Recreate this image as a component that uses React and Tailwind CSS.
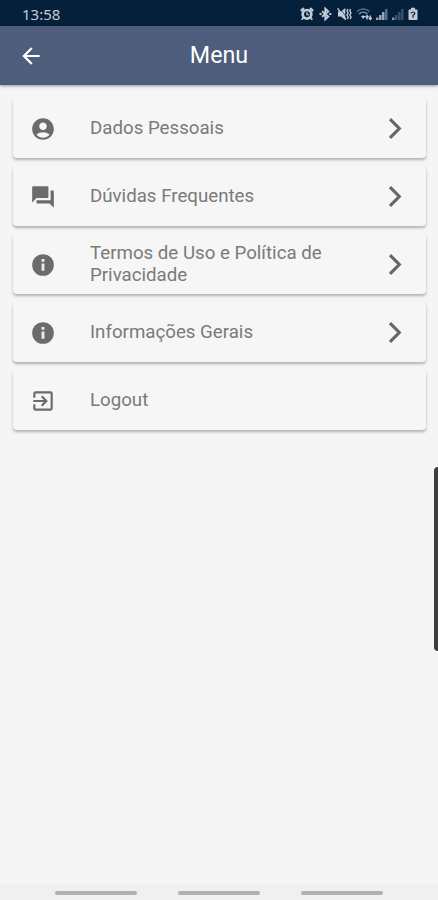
import React from "react";
import { MdAccountCircle, MdArrowBack, MdExitToApp, MdForum } from "react-icons/md";

const InfoIcon = ({ className }) => (
  <svg viewBox="0 0 24 24" fill="currentColor" className={className}>
    <circle cx="12" cy="12" r="10" />
    <path d="M10.700 6.500h2.600v2.500h-2.600zM10.700 10.700h2.600v6.600h-2.600z" fill="#ededed" />
  </svg>
);

const menuItems = [
  { id: "profile", label: "Dados Pessoais", icon: MdAccountCircle, arrow: true },
  { id: "faq", label: "Dúvidas Frequentes", icon: MdForum, arrow: true },
  { id: "terms", label: "Termos de Uso e Política de Privacidade", icon: InfoIcon, arrow: true },
  { id: "general", label: "Informações Gerais", icon: InfoIcon, arrow: true },
  { id: "logout", label: "Logout", icon: MdExitToApp, arrow: false },
];

const ChevronIcon = ({ className }) => (
  <svg width="14" height="22" viewBox="0 0 14 22" fill="none" stroke="currentColor" strokeWidth="3.100" className={className}>
    <path d="M2 1.200 11.300 10.500 2 19.800" />
  </svg>
);

const AlarmIcon = () => (
  <svg width="14" height="14" viewBox="0 0 14 14" fill="none" stroke="currentColor">
    <path d="M.8 3.800 4 1.200M13.200 3.800 10 1.200" strokeWidth="2.200" />
    <circle cx="7" cy="7.300" r="4.300" strokeWidth="2.700" />
    <path d="M7 5v2.700h2" strokeWidth="1.200" />
    <path d="M3.500 10.500 1.700 12.800M10.500 10.500l1.800 2.300" strokeWidth="1.800" />
  </svg>
);

const BluetoothIcon = () => (
  <svg width="13" height="14" viewBox="0 0 13 14" fill="none" stroke="currentColor">
    <path d="M3 4.200 9.300 9.600 6.300 12.400V1.600L9.300 4.400 3 9.800" strokeWidth="1.900" />
    <path d="M.5 6h2v2h-2zM10.300 6h2v2h-2z" fill="currentColor" stroke="none" />
  </svg>
);

const MuteIcon = () => (
  <svg width="15" height="14" viewBox="0 0 15 14" fill="currentColor">
    <path d="M1 4.500h3L8.300 1v12L4 9.500H1z" />
    <path d="M2.500 1 9 9.500" stroke="#04203b" strokeWidth=".7" />
    <path d="M.6 1.300 9 12.700" stroke="currentColor" strokeWidth="1.400" />
    <path
      d="M10.700 2 10 4l1.200 2-1.200 2 1.200 2-.7 2M13.500 2l-.7 2 1.200 2-1.200 2 1.200 2-.7 2"
      fill="none"
      stroke="currentColor"
      strokeWidth="1.400"
    />
  </svg>
);

const WifiIcon = () => (
  <svg width="17" height="14" viewBox="0 0 17 14" fill="none" stroke="currentColor">
    <path d="M1 4.500C4.500 1 10 1 13.500 4.500" strokeWidth="1.500" opacity=".45" />
    <path d="M3 7c2.500-2.400 6-2.400 8.500 0" strokeWidth="1.600" opacity=".65" />
    <path d="M5 9.200c1.400-1 3-1 4.300 0L7.200 12z" fill="currentColor" stroke="none" />
    <path d="M11 12.500V8.500M9.500 10.200 11 8.500l1.500 1.700M14.300 8.500v4M12.800 10.800l1.500 1.700 1.500-1.700" strokeWidth="1.400" />
  </svg>
);

const SignalIcon = ({ weak }) => (
  <svg width="12" height="13" viewBox="0 0 12 13" fill="currentColor">
    <path d="M0 9.500h2.500V12H0z" opacity={weak ? 0.7 : 0.8} />
    <path d="M3 7h2.500v5H3z" opacity={weak ? 0.28 : 0.8} />
    <path d="M6 4h2.500v8H6z" opacity={weak ? 0.28 : 0.8} />
    <path d="M9 1h2.500v11H9z" opacity={weak ? 0.28 : 0.45} />
  </svg>
);

const BatteryIcon = () => (
  <svg width="10" height="14" viewBox="0 0 10 14">
    <path d="M3 .8h4v1.700h1.500q1 0 1 1v8.500q0 1-1 1h-7q-1 0-1-1V3.500q0-1 1-1H3z" fill="currentColor" />
    <path d="M3.200 6.500q0-1.500 1.800-1.500t1.800 1.500Q6.800 7.500 5 8.200v2.600" fill="none" stroke="#04203b" strokeWidth="1.200" />
  </svg>
);

const StatusBar = () => (
  <div className="flex h-[26px] items-center bg-[#04203b] pt-0.5 pl-[22px] pr-5 text-[#c3ccd5]">
    <span className="font-['Noto_Sans',sans-serif] text-[15px] leading-none">13:58</span>
    <div className="ml-auto flex items-center">
      <AlarmIcon />
      <div className="ml-[5px]"><BluetoothIcon /></div>
      <div className="ml-[5px]"><MuteIcon /></div>
      <div className="ml-1"><WifiIcon /></div>
      <div className="ml-[3px]"><SignalIcon /></div>
      <div className="ml-1"><SignalIcon weak /></div>
      <div className="ml-1"><BatteryIcon /></div>
    </div>
  </div>
);

const Header = () => (
  <header className="grid h-[59px] grid-cols-[60px_1fr_60px] items-center bg-[#4d5d7b] text-white shadow-[0_1px_3px_rgba(0,0,0,0.4)]">
    <button type="button" aria-label="Voltar" className="pl-[17.500px]">
      <MdArrowBack className="size-[26px]" />
    </button>
    <h1 className="pt-px text-center text-[23.300px] leading-none">Menu</h1>
  </header>
);

const MenuItem = ({ item }) => {
  const Icon = item.icon;

  return (
    <button
      type="button"
      className="flex h-[60px] w-full items-center rounded-[4px] bg-[#f6f6f6] pt-px pl-[17px] pr-6 text-left text-[#7a7a7a] shadow-[0_2px_3px_rgba(0,0,0,0.28)]"
    >
      <Icon className="size-[26px] shrink-0 text-[#6b6b6b]" />
      <span className="ml-[34px] w-[260px] pb-px text-[18.700px] leading-[22px]">{item.label}</span>
      {item.arrow && <ChevronIcon className="ml-auto shrink-0 text-[#666666]" />}
    </button>
  );
};

const App = () => {
  return (
    <div className="relative flex h-[900px] w-full flex-col overflow-hidden bg-[#f5f5f5] font-[Roboto,sans-serif]">
      <StatusBar />
      <Header />

      <main className="flex flex-1 flex-col gap-2 pt-[13px] pl-[13px] pr-3">
        {menuItems.map((item) => (
          <MenuItem key={item.id} item={item} />
        ))}
      </main>

      {/* Edge panel handle */}
      <div className="absolute top-[467px] right-0 h-[184px] w-1 rounded-l-[4px] bg-[#3d3d3d]" />

      {/* Navigation gesture hints */}
      <nav className="flex h-4 items-center justify-center gap-[41px] bg-[#f0f0f0] pt-px">
        <span className="h-1 w-[82px] rounded-full bg-[#b0b0b0]" />
        <span className="h-1 w-[82px] rounded-full bg-[#b0b0b0]" />
        <span className="h-1 w-[82px] rounded-full bg-[#b0b0b0]" />
      </nav>
    </div>
  );
};

export default App;
